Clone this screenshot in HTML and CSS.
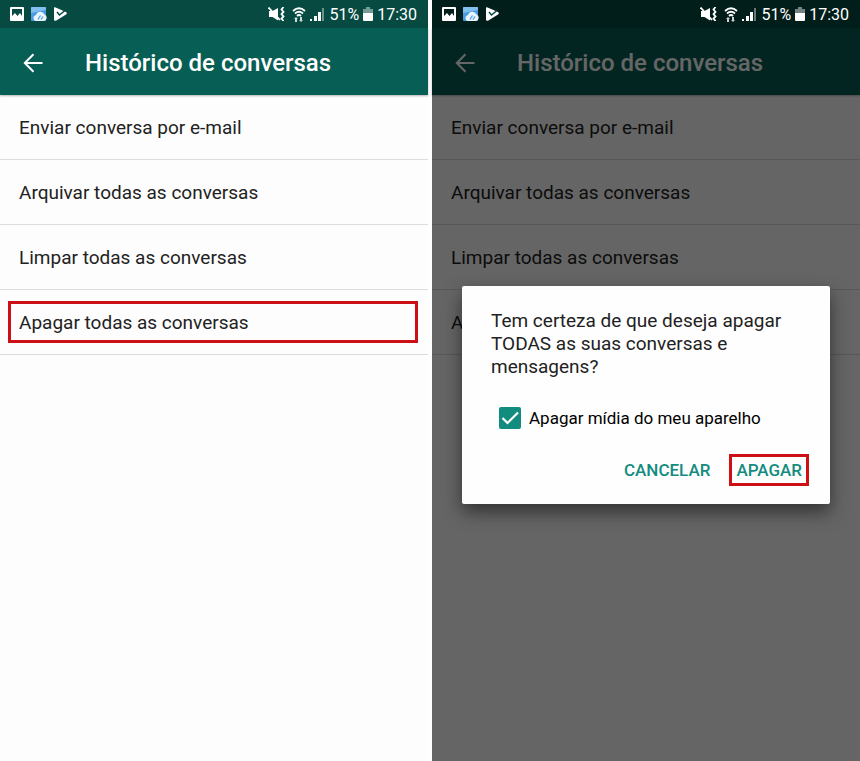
FILE: index.html
```
<!DOCTYPE html>
<html lang="pt-BR">
<head>
    <meta charset="UTF-8">
    <meta name="viewport" content="width=device-width, initial-scale=1.0">
    <title>Histórico de conversas</title>

    <link rel="stylesheet" href="styles.css">
</head>
<body>
    <!-- icones usados nas duas telas -->
    <svg class="sprite" aria-hidden="true">
        <symbol id="icon-image" viewBox="0 0 14 14">
            <path fill="#fff" fill-rule="evenodd" d="M1 0h12a1 1 0 0 1 1 1v12a1 1 0 0 1-1 1H1a1 1 0 0 1-1-1V1a1 1 0 0 1 1-1zM2 2v7l3-3 2.500 3L10 6l2 3V2z"/>
        </symbol>
        <symbol id="icon-cloud" viewBox="0 0 16 14">
            <rect width="15" height="14" rx="1" fill="#4a9be0"/>
            <path fill="#82c0f0" d="M0 1a1 1 0 0 1 1-1h13a1 1 0 0 1 1 1v2L0 6z"/>
            <path fill="#e9f5fd" d="M6 14a3 3 0 0 1-1-6 4.500 4.500 0 0 1 8.500-.5A3.400 3.400 0 0 1 13 14z"/>
            <path fill="none" stroke="#4a9be0" stroke-width="1.200" d="M7 12.500l2.500-4M10 12.500l2-3"/>
        </symbol>
        <symbol id="icon-play" viewBox="0 0 13 14">
            <path fill="#fff" d="M0 1Q0 0 1 .3L12 5q1.500 1 0 2.500L2 13.700Q0 14 0 13z"/>
            <path fill="none" stroke="#064a42" stroke-width="1.500" d="M3 5l2.500 3L11 3.500"/>
        </symbol>
        <symbol id="icon-mute" viewBox="0 0 17 14">
            <path fill="#fff" d="M1 4h3.500L10 1v12.500L4.500 10H1z"/>
            <path fill="none" stroke="#fff" stroke-width="1.800" d="M.5.500l11.500 12.500"/>
            <path fill="none" stroke="#fff" stroke-width="1.800" d="M15.500 0l-2 2.500 2 2.500-2 2 2 2.500-2 2 2 2.500"/>
        </symbol>
        <symbol id="icon-wifi" viewBox="0 0 14 15">
            <g fill="none" stroke="#fff" stroke-width="1.800">
                <path d="M1 4Q7-1.500 13 4M3 6.500Q7 3 11 6.500M5 9q2-2 4 0"/>
            </g>
            <path fill="#fff" d="M4 10l2 2H5v3H3v-3H2zM9 15l-2-2h1v-3h2v3h1z" opacity=".8"/>
        </symbol>
        <symbol id="icon-signal" viewBox="0 0 15 14">
            <path fill="#fff" d="M0 12h2v2H0zM4 9h3v5H4zM8 5h3v9H8z"/>
            <path fill="#fff" opacity=".4" d="M12 1h2v13h-2z"/>
        </symbol>
        <symbol id="icon-battery" viewBox="0 0 10 14">
            <path fill="#fff" opacity=".45" d="M3 0h4v2h3v5H0V2h3z"/>
            <path fill="#fff" d="M0 6h10v7a1 1 0 0 1-1 1H1a1 1 0 0 1-1-1z"/>
        </symbol>
        <symbol id="icon-back" viewBox="0 0 20 20">
            <path fill="none" stroke="#fff" stroke-width="2" d="M19.500 10H2M10.500 1.300L1.800 10l8.700 8.700"/>
        </symbol>
    </svg>

    <div class="screens">
        <section class="screen">
            <div class="status-bar">
                <svg class="icon-image"><use href="#icon-image"/></svg>
                <svg class="icon-cloud"><use href="#icon-cloud"/></svg>
                <svg class="icon-play"><use href="#icon-play"/></svg>
                <div class="status-right">
                    <svg class="icon-mute"><use href="#icon-mute"/></svg>
                    <svg class="icon-wifi"><use href="#icon-wifi"/></svg>
                    <svg class="icon-signal"><use href="#icon-signal"/></svg>
                    <span>51%</span>
                    <svg class="icon-battery"><use href="#icon-battery"/></svg>
                    <span>17:30</span>
                </div>
            </div>
            <div class="content">
                <header class="app-bar">
                    <button class="back" aria-label="Voltar"><svg><use href="#icon-back"/></svg></button>
                    <h1>Histórico de conversas</h1>
                </header>
                <ul class="options">
                    <li><button>Enviar conversa por e-mail</button></li>
                    <li><button>Arquivar todas as conversas</button></li>
                    <li><button>Limpar todas as conversas</button></li>
                    <li><button class="marked">Apagar todas as conversas</button></li>
                </ul>
            </div>
        </section>

        <section class="screen">
            <div class="status-bar dark">
                <svg class="icon-image"><use href="#icon-image"/></svg>
                <svg class="icon-cloud"><use href="#icon-cloud"/></svg>
                <svg class="icon-play"><use href="#icon-play"/></svg>
                <div class="status-right">
                    <svg class="icon-mute"><use href="#icon-mute"/></svg>
                    <svg class="icon-wifi"><use href="#icon-wifi"/></svg>
                    <svg class="icon-signal"><use href="#icon-signal"/></svg>
                    <span>51%</span>
                    <svg class="icon-battery"><use href="#icon-battery"/></svg>
                    <span>17:30</span>
                </div>
            </div>
            <div class="content">
                <header class="app-bar">
                    <button class="back" aria-label="Voltar"><svg><use href="#icon-back"/></svg></button>
                    <h1>Histórico de conversas</h1>
                </header>
                <ul class="options">
                    <li><button>Enviar conversa por e-mail</button></li>
                    <li><button>Arquivar todas as conversas</button></li>
                    <li><button>Limpar todas as conversas</button></li>
                    <li><button>Apagar todas as conversas</button></li>
                </ul>

                <div class="overlay">
                    <div class="dialog" role="dialog" aria-labelledby="dialog-text">
                        <p id="dialog-text">Tem certeza de que deseja apagar TODAS as suas conversas e mensagens?</p>
                        <div class="check">
                            <input type="checkbox" id="media" checked>
                            <label for="media">Apagar mídia do meu aparelho</label>
                        </div>
                        <div class="actions">
                            <button>CANCELAR</button>
                            <button class="marked">APAGAR</button>
                        </div>
                    </div>
                </div>
            </div>
        </section>
    </div>
</body>
</html>
```
FILE: styles.css
```
* {
    box-sizing: border-box;
}

body {
    margin: 0;
    background: #fff;
    font-family: Roboto, sans-serif;
    color: #222;
}

button {
    font-family: inherit;
    background: none;
    border: 3px solid transparent;
    cursor: pointer;
}

.sprite {
    display: none;
}

.screens {
    display: grid;
    grid-template-columns: 1fr 1fr;
    gap: 4px;
    min-height: 100vh;
}

.screen {
    display: flex;
    flex-direction: column;
    background: #fdfdfd;
}

/* barra de status */
.status-bar {
    display: flex;
    align-items: center;
    gap: 7px;
    height: 28px;
    padding: 0 11px 0 10px;
    background: #064a42;
    color: #fff;
    font-size: 16px;
}

.status-bar.dark {
    background: #021e1b;
}

.status-right {
    display: flex;
    align-items: center;
    gap: 4px;
    margin-left: auto;
}

.icon-image { width: 14px; height: 14px; }
.icon-cloud { width: 16px; height: 14px; }
.icon-play { width: 13px; height: 14px; }
.icon-mute { width: 17px; height: 14px; margin-right: 3px; }
.icon-wifi { width: 14px; height: 15px; }
.icon-signal { width: 15px; height: 14px; }
.icon-battery { width: 10px; height: 14px; }

.content {
    position: relative;
    flex: 1;
}

.app-bar {
    display: flex;
    align-items: center;
    gap: 40px;
    height: 67px;
    padding: 2px 21px 0;
    background: #075e54;
    color: #fff;
    box-shadow: 0 1px 2px rgba(0, 0, 0, 0.3);
}

.app-bar h1 {
    margin: 0;
    font-size: 24px;
    font-weight: 500;
}

.back {
    padding: 0;
    border: 0;
}

.back svg {
    display: block;
    width: 24px;
    height: 20px;
}

/* lista */
.options {
    margin: 0;
    padding: 0;
    list-style: none;
}

.options li {
    height: 65px;
    padding: 11px 10px 11px 8px;
    border-bottom: 1px solid #dcdcdc;
}

.options button {
    width: 100%;
    height: 42px;
    padding: 0 8px;
    font-size: 19px;
    color: #222;
    text-align: left;
}

.options .marked,
.actions .marked {
    border-color: #cc1016;
}

/* janela de confirmacao */
.overlay {
    position: absolute;
    inset: 0;
    display: flex;
    align-items: center;
    padding: 0 30px;
    background: rgba(0, 0, 0, 0.6);
}

.dialog {
    width: 100%;
    padding: 23px 21px 18px 29px;
    background: #fefefe;
    border-radius: 2px;
    box-shadow: 0 8px 18px rgba(0, 0, 0, 0.5);
}

.dialog p {
    margin: 0 0 29px;
    font-size: 19px;
    line-height: 23px;
}

.check {
    display: flex;
    align-items: center;
    gap: 8px;
    margin-bottom: 25px;
    padding-left: 8px;
    color: #000;
    font-size: 17px;
}

.check label {
    line-height: 22px;
}

.check input {
    appearance: none;
    width: 22px;
    height: 22px;
    margin: 0;
    border: 2px solid #128c7e;
    border-radius: 2px;
}

.check input:checked {
    background: #128c7e url("data:image/svg+xml,%3Csvg xmlns='http://www.w3.org/2000/svg' viewBox='0 0 18 18'%3E%3Cpath d='M1.500 9l5 5L17 3.500' fill='none' stroke='white' stroke-width='2.200'/%3E%3C/svg%3E") center / 18px no-repeat;
}

.actions {
    display: flex;
    justify-content: flex-end;
    gap: 12px;
}

.actions button {
    height: 32px;
    padding: 0 4px;
    color: #128c7e;
    font-size: 17px;
    font-weight: 500;
}
```
